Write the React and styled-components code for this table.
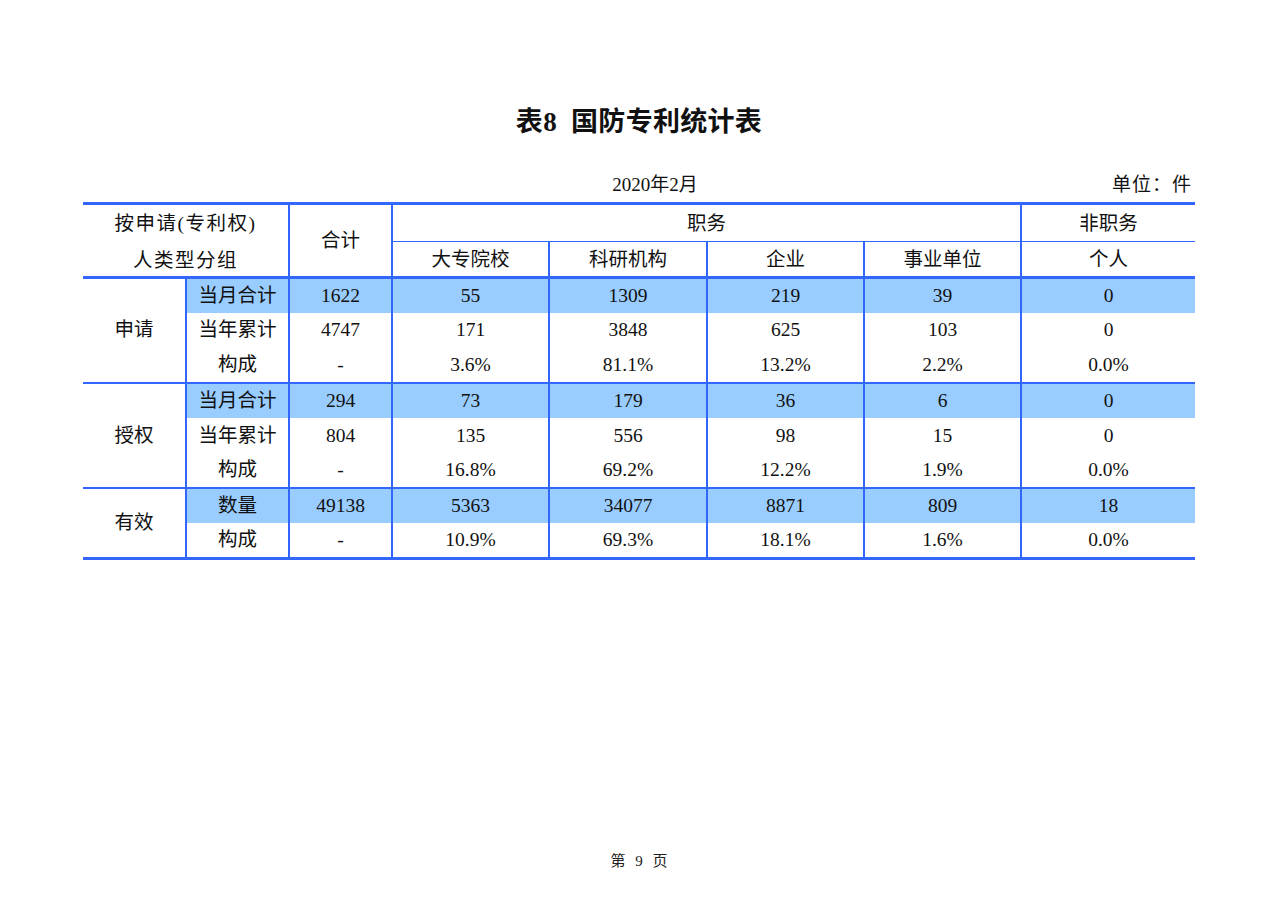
import React from "react";
import styled, { createGlobalStyle } from "styled-components";

const LINE = "#3366ff";
const FILL = "#99ccff";
const FONT = `"Liberation Serif", "Noto Sans CJK SC", serif`;

const Global = createGlobalStyle`
  html, body { margin: 0; padding: 0; background: #fff; }
  body { font-family: ${FONT}; color: #111; }
`;

const Page = styled.div`
  width: 1280px;
  min-height: 905px;
  box-sizing: border-box;
  display: flex;
  flex-direction: column;
  padding: 106px 85px 34px 83px;
`;

const Title = styled.h1`
  margin: 0;
  text-align: center;
  font-size: 27px;
  line-height: 32px;
  font-weight: 700;
  letter-spacing: 0.3px;
`;

const Caption = styled.div`
  margin-top: 35px;
  display: grid;
  grid-template-columns: 1fr auto 1fr;
  font-size: 19px;
  line-height: 24px;
`;

const DateText = styled.div`
  grid-column: 2;
  padding-left: 32px;
`;

const Unit = styled.div`
  grid-column: 3;
  justify-self: end;
  padding-right: 3px;
  letter-spacing: 1px;
`;

const Table = styled.table`
  width: 1112px;
  table-layout: fixed;
  border-collapse: collapse;
  font-size: 19.5px;
  margin-top: 5px;
  border-top: 3px solid ${LINE};
  border-bottom: 3px solid ${LINE};
`;

const HeadRow = styled.tr`
  height: ${(p) => p.$h}px;
`;

const Th = styled.th`
  font-weight: 400;
  padding: ${(p) => (p.$pt ? `${p.$pt}px 0 0` : 0)};
  text-align: center;
  vertical-align: middle;
  line-height: 24px;
  border-left: ${(p) => (p.$noLeft ? "none" : `2px solid ${LINE}`)};
  border-bottom: ${(p) => (p.$thin ? `1px solid ${LINE}` : `3px solid ${LINE}`)};
`;

const HeadLabel = styled.div`
  height: 68px;
  padding-top: 3px;
  display: flex;
  flex-direction: column;
  justify-content: center;
  align-items: center;
  letter-spacing: 1.5px;
`;

const HeadLine = styled.div`
  flex: 0 0 37px;
  line-height: 37px;
`;

const Tr = styled.tr`
  height: ${(p) => p.$h}px;
`;

const Td = styled.td`
  padding: 0;
  text-align: center;
  vertical-align: middle;
  line-height: 22px;
  background: ${(p) => (p.$hl ? FILL : "transparent")};
  border-left: ${(p) => (p.$noLeft ? "none" : `2px solid ${LINE}`)};
  border-top: ${(p) => (p.$top ? `2px solid ${LINE}` : "none")};
`;

const Footer = styled.div`
  margin-top: auto;
  text-align: center;
  font-size: 15px;
  line-height: 20px;
  word-spacing: 6px;
  color: #222;
`;

const widths = [103, 103, 103, 157, 158, 157, 157, 174];

const groups = [
  {
    name: "申请",
    rows: [
      ["当月合计", "1622", "55", "1309", "219", "39", "0"],
      ["当年累计", "4747", "171", "3848", "625", "103", "0"],
      ["构成", "-", "3.6%", "81.1%", "13.2%", "2.2%", "0.0%"],
    ],
  },
  {
    name: "授权",
    rows: [
      ["当月合计", "294", "73", "179", "36", "6", "0"],
      ["当年累计", "804", "135", "556", "98", "15", "0"],
      ["构成", "-", "16.8%", "69.2%", "12.2%", "1.9%", "0.0%"],
    ],
  },
  {
    name: "有效",
    rows: [
      ["数量", "49138", "5363", "34077", "8871", "809", "18"],
      ["构成", "-", "10.9%", "69.3%", "18.1%", "1.6%", "0.0%"],
    ],
  },
];

export default function App() {
  return (
    <>
      <Global />
      <Page>
        <Title>表8&nbsp; 国防专利统计表</Title>
        <Caption>
          <DateText>2020年2月</DateText>
          <Unit>单位：件</Unit>
        </Caption>
        <Table>
          <colgroup>
            {widths.map((w, i) => (
              <col key={i} style={{ width: w }} />
            ))}
          </colgroup>
          <thead>
            <HeadRow $h={37}>
              <Th colSpan={2} rowSpan={2} $noLeft>
                <HeadLabel>
                  <HeadLine>按申请(专利权)</HeadLine>
                  <HeadLine>人类型分组</HeadLine>
                </HeadLabel>
              </Th>
              <Th rowSpan={2}>合计</Th>
              <Th colSpan={4} $thin $pt={2}>职务</Th>
              <Th $thin $pt={2}>非职务</Th>
            </HeadRow>
            <HeadRow $h={36}>
              <Th $pt={2}>大专院校</Th>
              <Th $pt={2}>科研机构</Th>
              <Th $pt={2}>企业</Th>
              <Th $pt={2}>事业单位</Th>
              <Th $pt={2}>个人</Th>
            </HeadRow>
          </thead>
          <tbody>
            {groups.map((g, gi) =>
              g.rows.map((r, ri) => (
                <Tr key={`${gi}-${ri}`} $h={35}>
                  {ri === 0 && (
                    <Td rowSpan={g.rows.length} $top={gi > 0} $noLeft>
                      {g.name}
                    </Td>
                  )}
                  {r.map((c, ci) => (
                    <Td key={ci} $hl={ri === 0} $top={gi > 0 && ri === 0}>
                      {c}
                    </Td>
                  ))}
                </Tr>
              ))
            )}
          </tbody>
        </Table>
        <Footer>第 9 页</Footer>
      </Page>
    </>
  );
}
